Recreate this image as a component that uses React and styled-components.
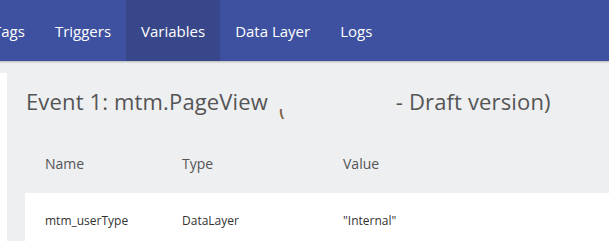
import React from 'react';
import styled, { createGlobalStyle } from 'styled-components';

const GlobalStyle = createGlobalStyle`
  html, body {
    margin: 0;
    padding: 0;
    background: #eeeff1;
    font-family: "Open Sans", "Noto Sans", sans-serif;
    overflow: hidden;
  }
`;

const tabs = ['Tags', 'Triggers', 'Variables', 'Data Layer', 'Logs'];

const variables = [
  { name: 'mtm_userType', type: 'DataLayer', value: '"Internal"' },
];

const Page = styled.div`
  width: 609px;
  height: 241px;
  display: flex;
  flex-direction: column;
`;

const NavBar = styled.nav`
  height: 61px;
  background: #3d51a0;
  display: flex;
  align-items: stretch;
  margin-left: -22px;
  box-shadow: 0 1px 2px rgba(0, 0, 0, 0.25);
  position: relative;
  z-index: 1;
`;

const Tab = styled.div`
  display: flex;
  align-items: center;
  padding: 0 15px;
  color: #fff;
  font-size: 15px;
  background: ${p => (p.$active ? '#384789' : 'transparent')};
`;

const Body = styled.div`
  flex: 1;
  display: flex;
  min-height: 0;
`;

const SideEdge = styled.div`
  width: 7px;
  margin-top: 12px;
  background: #fff;
`;

const Content = styled.main`
  flex: 1;
  padding: 25px 0 0 18px;
  min-width: 0;
`;

const Title = styled.h2`
  margin: 0 0 0 1px;
  font-weight: 400;
  font-size: 22px;
  line-height: 30px;
  letter-spacing: 0.15px;
  color: #555;
  white-space: nowrap;
`;

/* part of the title that is blanked out in the capture */
const Hidden = styled.span`
  display: inline-block;
  width: 116px;
  position: relative;
  vertical-align: baseline;
`;

const Paren = styled.span`
  position: absolute;
  left: 5px;
  bottom: -9px;
  height: 10px;
  overflow: hidden;
  color: #7a5f45;
  font-size: 22px;
  line-height: 10px;
  & > span {
    display: block;
    margin-top: -12px;
    line-height: 22px;
  }
`;

const Table = styled.div`
  margin-top: 18px;
`;

const Row = styled.div`
  display: grid;
  grid-template-columns: 137px 161px 1fr;
  align-items: center;
  height: ${p => (p.$head ? '59px' : '54px')};
  background: ${p => (p.$head ? 'transparent' : '#fff')};
  color: ${p => (p.$head ? '#555' : '#333')};
  font-size: ${p => (p.$head ? '14px' : '12px')};
`;

const Cell = styled.div`
  padding-left: 20px;
  white-space: nowrap;
`;

export default function App() {
  return (
    <Page>
      <GlobalStyle />
      <NavBar>
        {tabs.map(t => (
          <Tab key={t} $active={t === 'Variables'}>
            {t}
          </Tab>
        ))}
      </NavBar>
      <Body>
        <SideEdge />
        <Content>
          <Title>
            Event 1: mtm.PageView{' '}
            <Hidden>
              <Paren>
                <span>(</span>
              </Paren>
            </Hidden>
            {' '}- Draft version)
          </Title>
          <Table>
            <Row $head>
              <Cell>Name</Cell>
              <Cell>Type</Cell>
              <Cell>Value</Cell>
            </Row>
            {variables.map(v => (
              <Row key={v.name}>
                <Cell>{v.name}</Cell>
                <Cell>{v.type}</Cell>
                <Cell>{v.value}</Cell>
              </Row>
            ))}
          </Table>
        </Content>
      </Body>
    </Page>
  );
}
